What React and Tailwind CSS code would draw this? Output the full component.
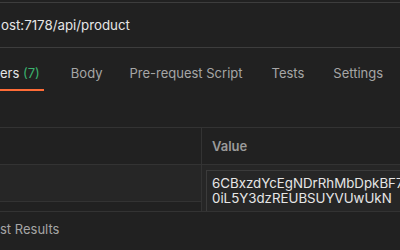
export default function App() {
  return (
    <div className="w-[400px] h-[250px] bg-[#212121] overflow-hidden font-['Inter','Liberation_Sans',sans-serif] text-[13px] leading-[20px]">
      <div className="mt-[2px] h-[46px] border-t border-b border-[#3d3d3d] flex items-center pl-[1px] text-[#e6e6e6] text-[13.3px] whitespace-nowrap">
        ost:7178/api/product
      </div>
      <div className="flex whitespace-nowrap">
        <div className="pt-[15px] pb-[6px] pr-[4px] border-b-2 border-[#ff6c37] text-[#e6e6e6]">
          ers <span className="text-[#3ab26e]">(7)</span>
        </div>
        <div className="ml-[27px] pt-[15px] pb-[6px] text-[#a6a6a6]">Body</div>
        <div className="ml-[27px] pt-[15px] pb-[6px] text-[#a6a6a6]">Pre-request Script</div>
        <div className="ml-[29px] pt-[15px] pb-[6px] text-[#a6a6a6]">Tests</div>
        <div className="ml-[29px] pt-[15px] pb-[6px] text-[#a6a6a6]">Settings</div>
      </div>
      <div className="mt-[36px] h-[84px] overflow-hidden border-t border-[#333333]">
        <div className="flex h-[37px] border-b border-[#333333]">
          <div className="w-[202px] shrink-0 border-r border-[#333333]"></div>
          <div className="pl-[10px] flex items-center text-[#9a9a9a] font-semibold">Value</div>
        </div>
        <div className="flex">
          <div className="w-[202px] shrink-0 border-r border-[#333333] flex flex-col">
            <div className="h-[37px] bg-[#262626] border-b border-[#333333]"></div>
          </div>
          <div className="flex-1 bg-[#262626] pl-[4px] pt-[5px]">
            <div className="w-[260px] border border-[#3b3b3b] pl-[5px] pt-[5px] pb-[6px] text-[#e6e6e6] text-[13.3px] leading-[15px] whitespace-nowrap">
              <div>6CBxzdYcEgNDrRhMbDpkBF7</div>
              <div>0iL5Y3dzREUBSUYVUwUkN</div>
            </div>
          </div>
        </div>
      </div>
      <div className="border-t border-[#333333] pt-[7px] text-[#a6a6a6] whitespace-nowrap">
        st Results
      </div>
    </div>
  );
}
